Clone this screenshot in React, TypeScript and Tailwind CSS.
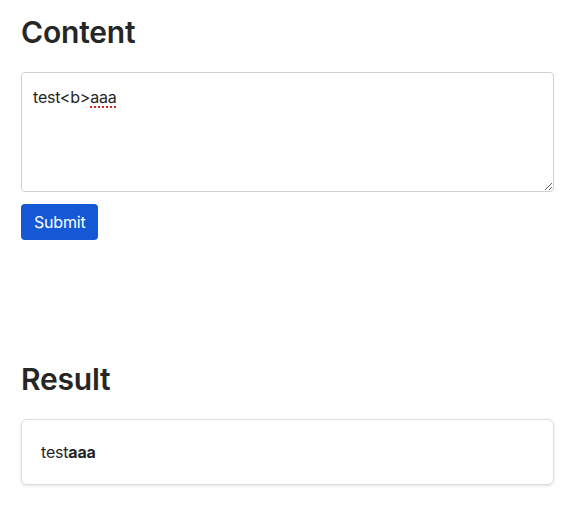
import React from "react"

export default function App() {
  return (
    <div className="min-h-[526px] bg-white px-[21px] pt-[12px] text-[#262626] [font-family:Inter,'Liberation_Sans',sans-serif]">
      <h1 className="text-[30px] font-semibold leading-[40px] tracking-[-0.2px]">Content</h1>

      <div className="mt-[20px] h-[120px] w-[533px] resize-y overflow-auto rounded-[4px] border border-[#cfcfcf] px-[11px] py-[12px] text-[16px] leading-[24px] tracking-[-0.2px] text-[#262626]">
        test&lt;b&gt;
        <span className="underline decoration-[#e0201b] decoration-dotted decoration-2 underline-offset-[3px]">
          aaa
        </span>
      </div>

      <button
        type="button"
        className="mt-[12px] h-[36px] rounded-[4px] bg-[#1558d6] px-[13px] text-[16px] leading-[24px] tracking-[-0.2px] text-white"
      >
        Submit
      </button>

      <h2 className="mt-[119px] text-[30px] font-semibold leading-[40px] tracking-[-0.2px]">Result</h2>

      <div className="mt-[20px] w-[533px] rounded-[6px] border border-[#dedede] px-[19px] py-[20px] text-[16px] leading-[24px] tracking-[-0.2px] shadow-[0_1px_3px_rgba(0,0,0,0.12)]">
        test<b className="font-bold">aaa</b>
      </div>
    </div>
  )
}
